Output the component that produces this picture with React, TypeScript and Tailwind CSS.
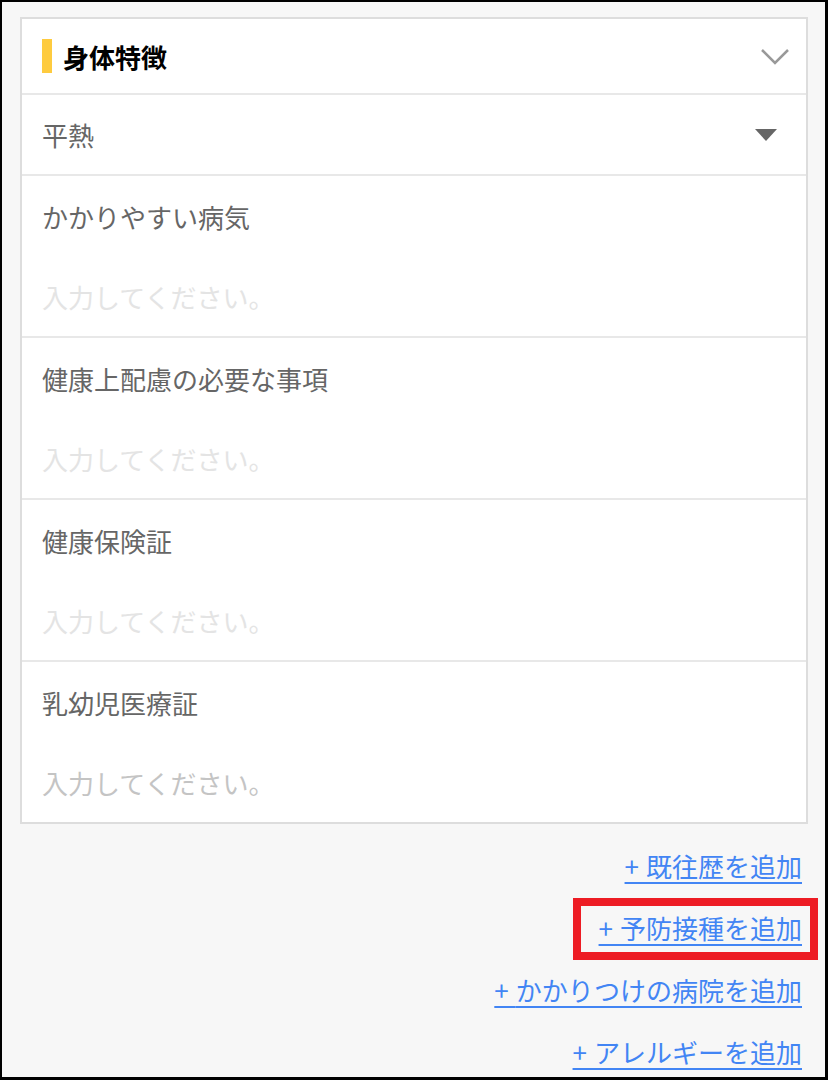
import React from "react";

const font = { fontFamily: '"Noto Sans CJK JP", "Noto Sans", sans-serif' };

function TextRow({ label, light }: { label: string; light?: boolean }) {
  return (
    <div className="border-t-2 border-[#e8e8e8]">
      <div className="h-[80px] flex items-center px-5 text-[26px] text-[#666666]">{label}</div>
      <div
        className={`h-[80px] flex items-center px-5 text-[26px] ${
          light ? "text-[#e4e4e4]" : "text-[#c4c4c4]"
        }`}
      >
        入力してください。
      </div>
    </div>
  );
}

function AddLink({ text, boxed }: { text: string; boxed?: boolean }) {
  return (
    <div className="h-[62px] flex items-center justify-end pr-[6px]">
      <span className="relative">
        {boxed && (
          <span className="absolute left-[-26px] right-[-16px] top-[-12px] bottom-[-14px] border-[8px] border-[#ed1c24]" />
        )}
        <a className="text-[26px] leading-[36px] text-[#4285f4] underline underline-offset-[5px] decoration-2 cursor-pointer">
          <span className="tracking-[7px]">+</span>
          {text}
        </a>
      </span>
    </div>
  );
}

export default function App() {
  return (
    <div
      className="w-[828px] h-[1080px] overflow-hidden bg-black pl-[2px] pt-[2px] pr-[3px] pb-[3px]"
      style={font}
    >
      <div className="h-full bg-[#f7f7f7] pl-[18px] pr-[17px] pt-[15px]">
        <div className="bg-white border-2 border-[#dddddd]">
          <div className="h-[74px] flex items-center pl-5 pr-[16px]">
            <div className="w-[10px] h-[34px] bg-[#fecb3f]" />
            <div className="ml-[11px] text-[26px] font-bold text-black flex-1">身体特徴</div>
            <svg width="30" height="18" viewBox="0 0 30 18" className="mt-[2px]">
              <path d="M2 2 L15 15 L28 2" fill="none" stroke="#999999" strokeWidth="2.5" />
            </svg>
          </div>
          <div className="border-t-2 border-[#e8e8e8] h-[81px] flex items-center px-5 pr-[29px]">
            <div className="flex-1 text-[26px] text-[#666666]">平熱</div>
            <svg width="22" height="12" viewBox="0 0 22 12">
              <path d="M0 0 L22 0 L11 12 Z" fill="#666666" />
            </svg>
          </div>
          <TextRow label="かかりやすい病気" light />
          <TextRow label="健康上配慮の必要な事項" light />
          <TextRow label="健康保険証" light />
          <TextRow label="乳幼児医療証" />
        </div>
        <div className="pt-[11px]">
          <AddLink text="既往歴を追加" />
          <AddLink text="予防接種を追加" boxed />
          <AddLink text="かかりつけの病院を追加" />
          <AddLink text="アレルギーを追加" />
        </div>
      </div>
    </div>
  );
}
